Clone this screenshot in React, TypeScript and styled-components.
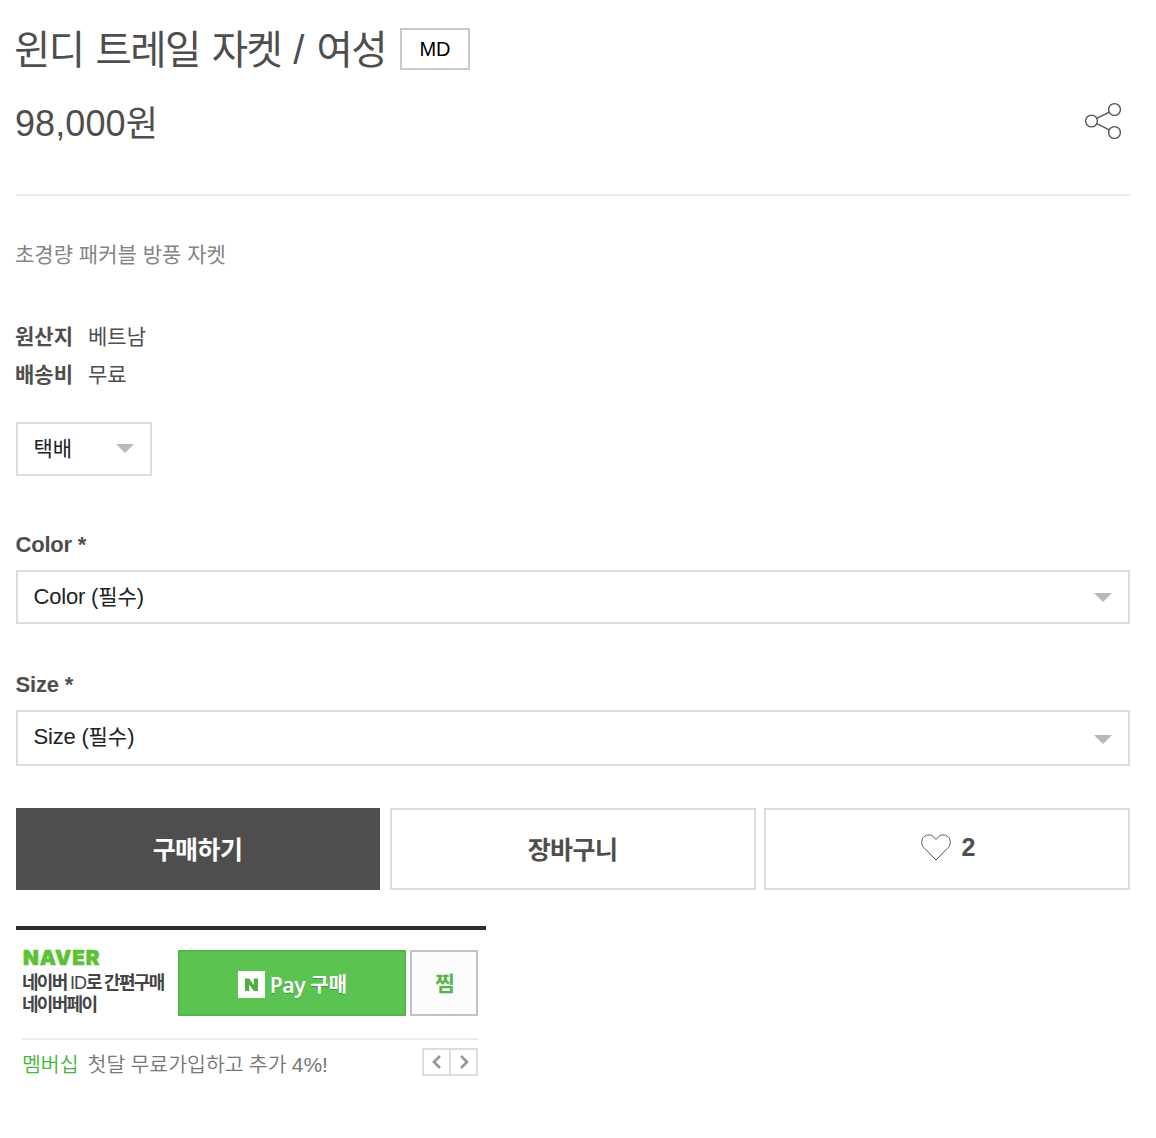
import React from "react";
import styled, { createGlobalStyle } from "styled-components";

const GlobalStyle = createGlobalStyle`
  *, *::before, *::after { box-sizing: border-box; }
  body {
    margin: 0;
    background: #fff;
    color: #4e4e4e;
    font-family: "Liberation Sans", "Noto Sans CJK KR", sans-serif;
    font-size: 22px;
  }
  button { font: inherit; color: inherit; padding: 0; margin: 0; }
`;

const Page = styled.main`
  display: flex;
  flex-direction: column;
  width: 1156px;
  height: 1138px;
  padding: 22px 26px 0 16px;
  overflow: hidden;
`;

const Ko = styled.span<{ $size: number; $track?: number }>`
  font-family: "Noto Sans CJK KR", sans-serif;
  font-size: ${(p) => p.$size}px;
  letter-spacing: ${(p) => p.$track ?? 0}px;
`;

const TitleRow = styled.header`
  display: flex;
  align-items: center;
  height: 54px;
`;

const Title = styled.h1`
  width: 384px;
  margin: -2px 0 0 -2px;
  font-family: "Noto Sans CJK KR", sans-serif;
  font-size: 39.5px;
  font-weight: 400;
  line-height: 54px;
  letter-spacing: -1.6px;
  word-spacing: 4.8px;
  white-space: nowrap;
`;

const Slash = styled.span`
  font-family: "Liberation Sans", sans-serif;
  font-size: 40px;
  letter-spacing: 0;
`;

const Badge = styled.span`
  margin-left: 2px;
  width: 70px;
  height: 42px;
  border: 2px solid #c9c9c9;
  color: #000;
  font-size: 20px;
  line-height: 38px;
  text-align: center;
`;

const PriceRow = styled.div`
  display: flex;
  align-items: center;
  justify-content: space-between;
  height: 118px;
  padding: 0 8px 26px 0;
`;

const Price = styled.strong`
  margin-left: -1px;
  font-size: 36px;
  font-weight: 400;
  line-height: 50px;
  letter-spacing: 0.1px;
`;

const IconButton = styled.button`
  display: flex;
  margin-top: -2px;
  border: 0;
  background: none;
`;

const Divider = styled.hr`
  width: 100%;
  height: 2px;
  margin: 0;
  border: 0;
  background: #ececec;
`;

const Summary = styled.p`
  margin: 40px 0 0 -1px;
  color: #848484;
  font-size: 21px;
  line-height: 34px;
  word-spacing: 1.2px;
  font-family: "Noto Sans CJK KR", sans-serif;
`;

const Facts = styled.dl`
  display: grid;
  grid-template-columns: 73px auto;
  grid-auto-rows: 38px;
  margin: 46px 0 0 -1px;
  font-family: "Noto Sans CJK KR", sans-serif;
  font-size: 21px;
  line-height: 38px;
`;

const Term = styled.dt`
  font-weight: 700;
`;

const Detail = styled.dd`
  margin: 0;
`;

const SelectBox = styled.div<{ $width?: string; $height?: number; $top?: number; $lift?: number }>`
  display: flex;
  flex: none;
  align-items: center;
  justify-content: space-between;
  width: ${(p) => p.$width ?? "100%"};
  height: ${(p) => p.$height ?? 54}px;
  margin-top: ${(p) => p.$top ?? 0}px;
  padding: 0 16px ${(p) => p.$lift ?? 0}px 16px;
  border: 2px solid #dbdbdb;
  color: #222;
  line-height: 34px;
  white-space: nowrap;
`;

const SelectText = styled.span<{ $drop?: number }>`
  margin: ${(p) => p.$drop ?? -2}px 0 0 -0.5px;
  letter-spacing: -0.2px;
`;

const Caret = styled.svg<{ $drop?: number }>`
  display: block;
  margin-top: ${(p) => p.$drop ?? 0}px;
`;

const FieldLabel = styled.label<{ $top: number }>`
  margin: ${(p) => p.$top}px 0 0 -0.5px;
  height: 26px;
  font-weight: 700;
  line-height: 26px;
  letter-spacing: -0.2px;
`;

const Actions = styled.div`
  display: grid;
  grid-template-columns: 364px 366px 366px;
  justify-content: space-between;
  flex: none;
  height: 82px;
  margin-top: 42px;
`;

const Action = styled.button<{ $primary?: boolean; $shift?: number }>`
  display: flex;
  align-items: center;
  justify-content: center;
  margin: 0 ${(p) => -(p.$shift ?? 0)}px 0 ${(p) => p.$shift ?? 0}px;
  border: 2px solid ${(p) => (p.$primary ? "#4e4e4e" : "#dbdbdb")};
  background: ${(p) => (p.$primary ? "#4e4e4e" : "#fff")};
  color: ${(p) => (p.$primary ? "#fff" : "#4e4e4e")};
  font-weight: 700;
  line-height: 36px;
`;

const ActionLabel = styled(Ko)`
  margin: -2px 1px 0 0;
`;

const LikeCount = styled.span`
  margin-left: 11px;
  font-size: 25px;
  line-height: 36px;
`;

const LikeInner = styled.span`
  display: flex;
  align-items: center;
  height: 36px;
  margin: 0 0 4px 2px;
`;

const PayPanel = styled.section`
  width: 470px;
  margin-top: 36px;
  padding: 20px 8px 0 6px;
  border-top: 4px solid #2b2b39;
`;

const PayTop = styled.div`
  display: flex;
  height: 90px;
  border-bottom: 2px solid #ececec;
`;

const PayIntro = styled.div`
  display: flex;
  flex-direction: column;
  width: 156px;
  color: #444;
  white-space: nowrap;
`;

const NaverMark = styled.span`
  height: 22px;
  padding-left: 1px;
  color: #5bc236;
  font-family: Inter, sans-serif;
  font-size: 20.5px;
  font-weight: 900;
  line-height: 15px;
  letter-spacing: 0.9px;
  -webkit-text-stroke: 0.6px #5bc236;
`;

const IntroLine = styled.span`
  font-family: "Liberation Sans", "Noto Sans CJK KR", sans-serif;
  font-size: 18px;
  font-weight: 700;
  line-height: 22px;
  letter-spacing: -1.7px;
`;

const Thin = styled.span`
  font-weight: 400;
  letter-spacing: -1px;
`;

const PayButton = styled.button`
  display: flex;
  align-items: center;
  justify-content: center;
  width: 228px;
  height: 66px;
  padding: 3px 0 0 1px;
  border: 2px solid #52b84a;
  background: #5bc451;
  color: #fff;
`;

const PayMark = styled.svg`
  display: block;
  margin-right: 5px;
`;

const PayWord = styled.span`
  font-family: "Noto Sans", sans-serif;
  font-size: 21px;
  font-weight: 600;
  line-height: 30px;
  letter-spacing: -0.4px;
  text-shadow: 0 1px 1px #3e9c38;
`;

const PayAction = styled.span`
  margin: -2px 0 0 5px;
  font-family: "Noto Sans CJK KR", sans-serif;
  font-size: 20px;
  font-weight: 700;
  line-height: 30px;
  text-shadow: 0 1px 1px #3e9c38;
`;

const WishButton = styled.button`
  width: 68px;
  height: 66px;
  margin-left: 4px;
  padding: 0 0 3px 2px;
  border: 2px solid #bfc3c8;
  background: #fcfcfc;
  color: #55b54a;
  font-family: "Noto Sans CJK KR", sans-serif;
  font-size: 21px;
  font-weight: 700;
`;

const PromoRow = styled.div`
  display: flex;
  align-items: center;
  height: 44px;
  color: #777;
  font-family: "Noto Sans CJK KR", sans-serif;
  font-size: 20.5px;
  font-weight: 350;
  white-space: nowrap;
`;

const PromoTag = styled.span`
  margin: 2px 9px 0 0;
  color: #45b53c;
`;

const PromoText = styled.span`
  flex: 1;
  margin-top: 2px;
  word-spacing: 0.6px;
`;

const Rate = styled.span`
  font-family: "Liberation Sans", sans-serif;
  font-size: 21px;
`;

const Pager = styled.div`
  display: flex;
`;

const PagerButton = styled.button`
  display: flex;
  align-items: center;
  justify-content: center;
  width: 29px;
  height: 28px;
  border: 2px solid #dcdde3;
  background: #fff;
  & + & { margin-left: -2px; }
`;

const ArrowDown = ({ drop }: { drop?: number }) => (
  <Caret width="18" height="9" viewBox="0 0 18 9" $drop={drop}>
    <path d="M0 0H18L9 9Z" fill="#b8b8b8" />
  </Caret>
);

const ShareIcon = () => (
  <svg width="38" height="38" viewBox="0 0 38 38" fill="none" stroke="#555" strokeWidth="1.4">
    <circle cx="7.5" cy="19" r="5.9" />
    <circle cx="30.5" cy="7.5" r="5.9" />
    <circle cx="30.5" cy="30.5" r="5.9" />
    <path d="M12.8 16.4L25.2 10.1M12.8 21.6L25.2 27.9" />
  </svg>
);

const HeartIcon = () => (
  <svg width="30" height="27" viewBox="0 0 30 27" fill="none" stroke="#555" strokeWidth="1">
    <path d="M15 26L2.5 13.2C-.2 9.8 .2 5.2 3 2.7C6 .3 10.2 .4 12.7 2.9L15 5.4L17.3 2.9C19.8 .4 24 .3 27 2.7C29.8 5.2 30.2 9.8 27.5 13.2Z" />
  </svg>
);

const Chevron = ({ flip }: { flip?: boolean }) => (
  <svg width="10" height="16" viewBox="0 0 10 16" fill="none" stroke="#96979c" strokeWidth="2.6">
    <path d={flip ? "M2 2L8 8L2 14" : "M8 2L2 8L8 14"} />
  </svg>
);

export default function App() {
  return (
    <>
      <GlobalStyle />
      <Page>
        <TitleRow>
          <Title>윈디 트레일 자켓 <Slash>/</Slash> 여성</Title>
          <Badge>MD</Badge>
        </TitleRow>
        <PriceRow>
          <Price>98,000<Ko $size={35}>원</Ko></Price>
          <IconButton aria-label="공유"><ShareIcon /></IconButton>
        </PriceRow>
        <Divider />
        <Summary>초경량 패커블 방풍 자켓</Summary>
        <Facts>
          <Term>원산지</Term>
          <Detail>베트남</Detail>
          <Term>배송비</Term>
          <Detail>무료</Detail>
        </Facts>
        <SelectBox $width="136px" $top={30} $lift={2}>
          <SelectText $drop={0}><Ko $size={21}>택배</Ko></SelectText>
          <ArrowDown />
        </SelectBox>

        <FieldLabel $top={56}>Color *</FieldLabel>
        <SelectBox $top={12}>
          <SelectText>Color (<Ko $size={21}>필수</Ko>)</SelectText>
          <ArrowDown />
        </SelectBox>

        <FieldLabel $top={48}>Size *</FieldLabel>
        <SelectBox $top={12} $height={56} $lift={2}>
          <SelectText>Size (<Ko $size={21}>필수</Ko>)</SelectText>
          <ArrowDown drop={4} />
        </SelectBox>

        <Actions>
          <Action $primary><ActionLabel $size={25} $track={-0.6}>구매하기</ActionLabel></Action>
          <Action $shift={1}><ActionLabel $size={25} $track={-0.6}>장바구니</ActionLabel></Action>
          <Action>
            <LikeInner>
              <HeartIcon />
              <LikeCount>2</LikeCount>
            </LikeInner>
          </Action>
        </Actions>

        <PayPanel>
          <PayTop>
            <PayIntro>
              <NaverMark>NAVER</NaverMark>
              <IntroLine>네이버 <Thin>ID</Thin>로 간편구매</IntroLine>
              <IntroLine>네이버페이</IntroLine>
            </PayIntro>
            <PayButton>
              <PayMark width="27" height="27" viewBox="0 0 27 27">
                <path d="M0 0H27V27H0Z" fill="#fff" />
                <path d="M7 7.5H11.2L15.8 14V7.5H20V20H15.8L11.2 13.500V20H7Z" fill="#4fae43" />
              </PayMark>
              <PayWord>Pay</PayWord>
              <PayAction>구매</PayAction>
            </PayButton>
            <WishButton>찜</WishButton>
          </PayTop>
          <PromoRow>
            <PromoTag>멤버십</PromoTag>
            <PromoText>첫달 무료가입하고 추가 <Rate>4%!</Rate></PromoText>
            <Pager>
              <PagerButton aria-label="이전"><Chevron /></PagerButton>
              <PagerButton aria-label="다음"><Chevron flip /></PagerButton>
            </Pager>
          </PromoRow>
        </PayPanel>
      </Page>
    </>
  );
}
